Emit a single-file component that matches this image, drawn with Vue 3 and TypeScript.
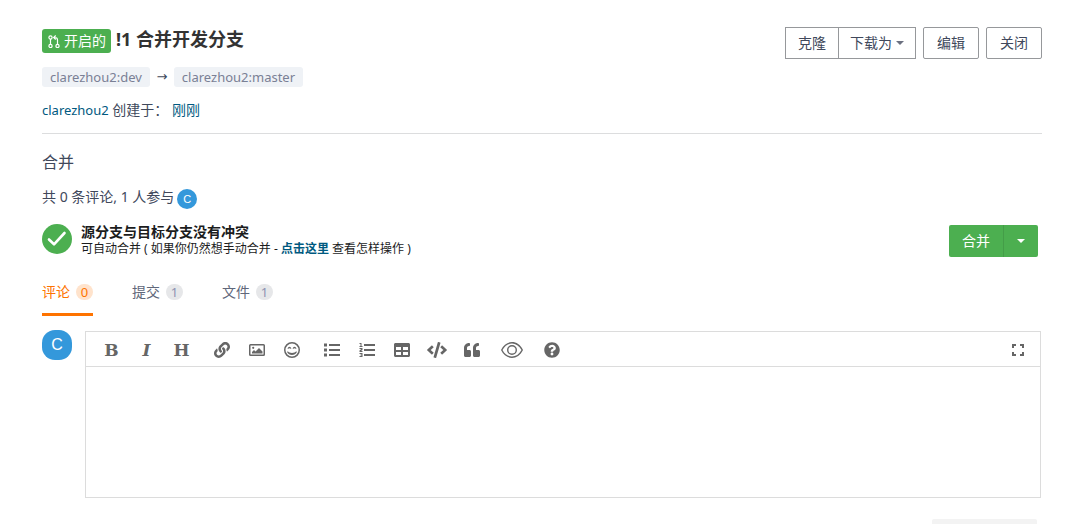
<script setup lang="ts">
import { ref } from 'vue'

interface Tab {
  id: string
  label: string
  count: number
}

interface Tool {
  name: string
  title: string
  viewBox?: string
  path?: string
  letter?: string
}

const tabs: Tab[] = [
  { id: 'comments', label: '评论', count: 0 },
  { id: 'commits', label: '提交', count: 1 },
  { id: 'files', label: '文件', count: 1 },
]
const activeTab = ref('comments')
const comment = ref('')

const tools: Tool[] = [
  { name: 'bold', title: '粗体', letter: 'B' },
  { name: 'italic', title: '斜体', letter: 'I' },
  { name: 'heading', title: '标题', letter: 'H' },
  {
    name: 'link',
    title: '链接',
    viewBox: '0 0 512 512',
    path: 'M326.612 185.391c59.747 59.809 58.927 155.698.36 214.59-.11.12-.24.25-.36.37l-67.2 67.2c-59.27 59.27-155.699 59.262-214.96 0-59.27-59.26-59.27-155.7 0-214.96l37.106-37.106c9.84-9.84 26.786-3.3 27.294 10.606.648 17.722 3.826 35.527 9.69 52.721 1.986 5.822.567 12.262-3.783 16.612l-13.087 13.087c-28.026 28.026-28.905 73.66-1.155 101.96 28.024 28.579 74.086 28.749 102.325.51l67.2-67.19c28.191-28.191 28.073-73.757 0-101.83-3.701-3.694-7.429-6.564-10.341-8.569a16.037 16.037 0 0 1-6.947-12.606c-.396-10.567 3.348-21.456 11.698-29.806l21.054-21.055c5.521-5.521 14.182-6.199 20.584-1.731a152.482 152.482 0 0 1 20.522 17.197zM467.547 44.449c-59.261-59.262-155.69-59.27-214.96 0l-67.2 67.2c-.12.12-.25.25-.36.37-58.566 58.892-59.387 154.781.36 214.59a152.454 152.454 0 0 0 20.521 17.196c6.402 4.468 15.064 3.789 20.584-1.731l21.054-21.055c8.35-8.35 12.094-19.239 11.698-29.806a16.037 16.037 0 0 0-6.947-12.606c-2.912-2.005-6.64-4.875-10.341-8.569-28.073-28.073-28.191-73.639 0-101.83l67.2-67.19c28.239-28.239 74.3-28.069 102.325.51 27.75 28.3 26.872 73.934-1.155 101.96l-13.087 13.087c-4.35 4.35-5.769 10.79-3.783 16.612 5.864 17.194 9.042 34.999 9.69 52.721.509 13.906 17.454 20.446 27.294 10.606l37.106-37.106c59.271-59.259 59.271-155.699.001-214.959z',
  },
  {
    name: 'image',
    title: '图片',
    viewBox: '0 0 16 16',
    path: 'M1.500 2h13A1.500 1.500 0 0 1 16 3.500v9a1.500 1.500 0 0 1-1.500 1.500h-13A1.500 1.500 0 0 1 0 12.500v-9A1.500 1.500 0 0 1 1.500 2zM1.500 3.500v9h13v-9zM3 11.500V10l2-2 1.500 1.500L10 6l3.500 3.500v2zM4.200 4.700a1.100 1.100 0 1 1 0 2.200 1.100 1.100 0 0 1 0-2.200z',
  },
  {
    name: 'emoji',
    title: '表情',
    viewBox: '0 0 16 16',
    path: 'M8 0a8 8 0 1 1 0 16A8 8 0 0 1 8 0zm0 1.500a6.500 6.500 0 1 0 0 13A6.500 6.500 0 0 0 8 1.500zM3.600 7C4 4 7 4 7.300 7L5.500 6.300zM8.700 7C9 4 12 4 12.400 7L10.500 6.300zM3.800 9.300c1.600 2.200 6.800 2.200 8.400 0l.7.6c-1.500 4-8.300 4-9.800 0z',
  },
  {
    name: 'list',
    title: '无序列表',
    viewBox: '0 0 16 16',
    path: 'M0 1.500h3v3H0zM0 6.500h3v3H0zM0 11.500h3v3H0zM5 2h11v2H5zM5 7h11v2H5zM5 12h11v2H5z',
  },
  {
    name: 'ordered',
    title: '有序列表',
    viewBox: '0 0 16 16',
    path: 'M5 2h11v2H5zM5 7h11v2H5zM5 12h11v2H5zM.5 1h2v3h1v1H.500V4h1V2h-1zM.5 6h3v2l-1.500 1h1.500v1h-3V8.500L2.300 7H.5zM.5 11h3v4h-3v-1h2v-.6h-1v-.8h1V12h-2z',
  },
  {
    name: 'table',
    title: '表格',
    viewBox: '0 0 512 512',
    path: 'M464 32H48C21.490 32 0 53.490 0 80v352c0 26.510 21.490 48 48 48h416c26.510 0 48-21.490 48-48V80c0-26.510-21.490-48-48-48zM224 416H64v-96h160v96zm0-160H64v-96h160v96zm224 160H288v-96h160v96zm0-160H288v-96h160v96z',
  },
  {
    name: 'code',
    title: '代码',
    viewBox: '0 0 640 512',
    path: 'M278.900 511.500l-61-17.700c-6.400-1.800-10-8.500-8.200-14.900L346.200 8.700c1.800-6.400 8.500-10 14.900-8.200l61 17.700c6.400 1.800 10 8.500 8.200 14.900L293.800 503.300c-1.900 6.400-8.500 10.100-14.900 8.200zm-114-112.200l43.500-46.400c4.600-4.900 4.300-12.700-.8-17.200L117 256l90.600-79.700c5.100-4.500 5.500-12.300.8-17.200l-43.500-46.400c-4.500-4.800-12.100-5.100-17-.5L3.800 247.200c-5.100 4.700-5.100 12.800 0 17.500l144.100 135.100c4.900 4.600 12.500 4.400 17-.5zm327.200.6l144.100-135.100c5.100-4.700 5.100-12.800 0-17.500L492.100 112.100c-4.800-4.500-12.400-4.300-17 .5L431.600 159c-4.600 4.900-4.300 12.700.8 17.200L523 256l-90.600 79.700c-5.100 4.500-5.500 12.300-.8 17.200l43.500 46.400c4.500 4.900 12.100 5.100 17 .6z',
  },
  {
    name: 'quote',
    title: '引用',
    viewBox: '0 0 512 512',
    path: 'M464 256h-80v-64c0-35.300 28.700-64 64-64h8c13.300 0 24-10.700 24-24V56c0-13.300-10.700-24-24-24h-8c-88.400 0-160 71.600-160 160v240c0 26.500 21.500 48 48 48h128c26.500 0 48-21.500 48-48V304c0-26.500-21.500-48-48-48zm-288 0H96v-64c0-35.300 28.700-64 64-64h8c13.300 0 24-10.700 24-24V56c0-13.300-10.700-24-24-24h-8C71.600 32 0 103.600 0 192v240c0 26.500 21.500 48 48 48h128c26.500 0 48-21.500 48-48V304c0-26.500-21.500-48-48-48z',
  },
  {
    name: 'preview',
    title: '预览',
    viewBox: '0 0 22 16',
    path: 'M0 8C5-2.600 17-2.600 22 8 17 18.600 5 18.600 0 8zM1.500 8c4.500 8.700 14.500 8.700 19 0C16-.7 6-.7 1.500 8zM11 3a5 5 0 1 1 0 10 5 5 0 0 1 0-10zm0 1.400a3.600 3.600 0 1 0 0 7.200 3.600 3.600 0 0 0 0-7.200z',
  },
  {
    name: 'help',
    title: '帮助',
    viewBox: '0 0 512 512',
    path: 'M504 256c0 136.997-111.043 248-248 248S8 392.997 8 256C8 119.083 119.043 8 256 8s248 111.083 248 248zM262.655 90c-54.497 0-89.255 22.957-116.549 63.758-3.536 5.286-2.353 12.415 2.715 16.258l34.699 26.310c5.205 3.947 12.621 3.008 16.665-2.122 17.864-22.658 30.113-35.797 57.303-35.797 20.429 0 45.698 13.148 45.698 32.958 0 14.976-12.363 22.667-32.534 33.976C247.128 238.528 216 254.941 216 296v4c0 6.627 5.373 12 12 12h56c6.627 0 12-5.373 12-12v-1.333c0-28.462 83.186-29.647 83.186-106.667 0-58.002-60.165-102-116.531-102zM256 338c-25.365 0-46 20.635-46 46 0 25.364 20.635 46 46 46s46-20.636 46-46c0-25.365-20.635-46-46-46z',
  },
]
</script>

<template>
  <main class="page">
    <header class="head">
      <div class="intro">
        <h1 class="title">
          <span class="state">
            <svg class="state-icon" viewBox="0 0 12 14" aria-hidden="true">
              <g fill="none" stroke="currentColor" stroke-width="1.200">
                <circle cx="2.500" cy="3.500" r="1.600" />
                <circle cx="2.500" cy="12" r="1.600" />
                <circle cx="9.500" cy="12" r="1.600" />
                <path d="M2.500 5v5.500M9.500 10.500V6a2.500 2.500 0 0 0-2.500-2.500H6M7.700 1.500 5.700 3.500l2 2" />
              </g>
            </svg>
            开启的
          </span>
          <span>!1 合并开发分支</span>
        </h1>
        <div class="branches">
          <span class="branch">clarezhou2:dev</span>
          <span class="arrow">→</span>
          <span class="branch">clarezhou2:master</span>
        </div>
        <p class="created"><a href="#author" class="author">clarezhou2</a> 创建于： <a href="#time">刚刚</a></p>
      </div>
      <div class="actions">
        <div class="group">
          <button type="button" class="btn">克隆</button>
          <button type="button" class="btn download">下载为<span class="caret"></span></button>
        </div>
        <button type="button" class="btn round">编辑</button>
        <button type="button" class="btn round">关闭</button>
      </div>
    </header>

    <h2 class="subject">合并</h2>
    <div class="people">
      <span>共 0 条评论, 1 人参与</span>
      <span class="avatar small">C</span>
    </div>

    <section class="merge">
      <svg class="check" viewBox="0 0 30 30" aria-hidden="true">
        <circle cx="15" cy="15" r="15" fill="#4caf50" />
        <path d="M7 15.500l5 4.800L22.500 9" fill="none" stroke="#fff" stroke-width="2.600" stroke-linecap="round" stroke-linejoin="round" />
      </svg>
      <div class="merge-text">
        <strong>源分支与目标分支没有冲突</strong>
        <p>可自动合并 ( 如果你仍然想手动合并 - <a href="#manual">点击这里</a> 查看怎样操作 )</p>
      </div>
      <div class="merge-actions">
        <button type="button" class="merge-btn">合并</button>
        <button type="button" class="merge-more" aria-label="更多合并方式"><span class="caret"></span></button>
      </div>
    </section>

    <nav class="tabs">
      <a
        v-for="tab in tabs"
        :key="tab.id"
        :href="'#' + tab.id"
        class="tab"
        :class="{ active: tab.id === activeTab }"
        @click.prevent="activeTab = tab.id"
      >{{ tab.label }}<span class="count">{{ tab.count }}</span></a>
    </nav>

    <section class="composer">
      <span class="avatar">C</span>
      <div class="editor">
        <div class="toolbar">
          <button v-for="tool in tools" :key="tool.name" type="button" class="tool" :class="tool.name" :aria-label="tool.title">
            <span v-if="tool.letter">{{ tool.letter }}</span>
            <svg v-else :viewBox="tool.viewBox" aria-hidden="true">
              <path :d="tool.path" fill="currentColor" fill-rule="evenodd" />
            </svg>
          </button>
          <button type="button" class="tool expand" aria-label="全屏">
            <svg viewBox="0 0 12 12" aria-hidden="true">
              <path d="M1 4V1h3M8 1h3v3M11 8v3H8M4 11H1V8" fill="none" stroke="currentColor" stroke-width="2" />
            </svg>
          </button>
        </div>
        <textarea v-model="comment" class="input" aria-label="评论内容"></textarea>
      </div>
    </section>
    <div class="submit-row">
      <button type="button" class="submit" disabled aria-label="提交评论"></button>
    </div>
  </main>
</template>

<style>
html,
body {
  margin: 0;
  background: #fff;
}
body {
  overflow: hidden;
}
</style>

<style scoped>
.page {
  box-sizing: border-box;
  padding: 27px 38px 0 42px;
  font: 14px/20px "Noto Sans", "Noto Sans CJK SC", sans-serif;
  color: #40485b;
}
h1, h2, p {
  margin: 0;
  font-weight: 400;
}
a {
  color: #005980;
  text-decoration: none;
}
button {
  margin: 0;
  font: inherit;
  color: inherit;
  cursor: pointer;
}
.head {
  display: flex;
  justify-content: space-between;
  height: 106px;
  border-bottom: 1px solid #dcddde;
}
.title {
  display: flex;
  gap: 5px;
  font-size: 18px;
  line-height: 24px;
  font-weight: 700;
  color: #333;
}
.state {
  display: flex;
  align-items: center;
  gap: 4px;
  height: 24px;
  margin-top: 2px;
  padding: 0 5px 0 6px;
  border-radius: 3px;
  background: #4caf50;
  color: #fff;
  font-size: 14px;
  font-weight: 400;
}
.state-icon {
  width: 12px;
  height: 14px;
}
.branches {
  display: flex;
  align-items: center;
  margin-top: 14px;
}
.branch {
  padding: 0 8px;
  border-radius: 3px;
  background: #eff2f6;
  color: #7a8095;
  font-size: 13px;
}
.arrow {
  width: 24px;
  text-align: center;
  font-family: "DejaVu Sans", sans-serif;
  font-size: 13px;
}
.created {
  margin-top: 13px;
}
.author {
  font-size: 13px;
}
.actions {
  display: flex;
  gap: 7px;
  height: 32px;
}
.group {
  display: flex;
}
.btn {
  padding: 0 12px;
  border: 1px solid #96989b;
  background: #fff;
}
.btn.round {
  padding: 0 13px;
  border-radius: 2px;
}
.btn.download {
  margin-left: -1px;
  padding: 0 11px;
}
.caret {
  display: inline-block;
  margin-left: 4px;
  border: 4px solid transparent;
  border-top-color: currentColor;
  border-bottom: 0;
  vertical-align: 3px;
}
.download .caret {
  color: #6b7080;
}
.subject {
  margin-top: 18px;
  font-size: 16px;
}
.people {
  display: flex;
  gap: 3px;
  height: 22px;
  margin-top: 15px;
}
.avatar {
  flex: none;
  width: 30px;
  border-radius: 13px;
  background: #3498db;
  color: #fff;
  font: 16px/30px "Liberation Sans", sans-serif;
  text-align: center;
  height: 30px;
}
.avatar.small {
  width: 20px;
  height: 20px;
  margin-top: 2px;
  border-radius: 10px;
  font-size: 11px;
  line-height: 20px;
}
.merge {
  display: flex;
  height: 34px;
  margin-top: 15px;
  padding-right: 4px;
  color: #1b1c1d;
}
.check {
  width: 30px;
  height: 30px;
  margin-right: 9px;
}
.merge-text strong {
  display: block;
  line-height: 16px;
}
.merge-text p {
  font-size: 12px;
  line-height: 18px;
}
.merge-text a {
  font-weight: 700;
}
.merge-actions {
  display: flex;
  height: 32px;
  margin: 1px 0 0 auto;
}
.merge-actions button {
  border: 0;
  padding: 0 13px;
  background: #4caf50;
  color: #fff;
}
.merge-actions .merge-btn {
  border-right: 1px solid #449d48;
  border-radius: 2px 0 0 2px;
}
.merge-actions .merge-more {
  border-radius: 0 2px 2px 0;
}
.merge-more .caret {
  margin-left: 0;
}
.tabs {
  display: flex;
  gap: 39px;
  margin-top: 24px;
}
.tab {
  display: flex;
  gap: 6px;
  height: 31px;
  border-bottom: 3px solid transparent;
  color: #60677a;
}
.tab.active {
  border-color: #fe7300;
  color: #fe7300;
}
.count {
  width: 17px;
  height: 16px;
  margin-top: 2px;
  border-radius: 8px;
  background: #e6e7e9;
  color: #8c92b0;
  font-size: 13px;
  line-height: 16px;
  text-align: center;
}
.active .count {
  background: #ffe3cc;
  color: #fe7300;
}
.composer {
  display: flex;
  gap: 13px;
  margin-top: 14px;
}
.editor {
  flex: 1;
  margin: 1px 1px 0 0;
  border: 1px solid #dcdcdc;
}
.toolbar {
  display: flex;
  align-items: center;
  height: 32px;
  padding: 2px 10px 0 13px;
  border-bottom: 1px solid #dcdcdc;
  color: #666;
}
.tool {
  display: flex;
  align-items: center;
  justify-content: center;
  width: 25px;
  height: 26px;
  margin-right: 10px;
  padding: 0;
  border: 0;
  background: none;
  font: 700 17px/26px "DejaVu Serif", serif;
}
.tool svg {
  width: 16px;
  height: 16px;
}
.tool.italic {
  font-style: italic;
}
.tool.heading,
.tool.emoji,
.tool.quote,
.tool.preview {
  margin-right: 15px;
}
.tool.code svg {
  width: 20px;
}
.tool.preview svg {
  width: 22px;
}
.tool.expand {
  width: 24px;
  margin: 0 0 0 auto;
}
.tool.expand svg {
  width: 12px;
  height: 12px;
}
.input {
  display: block;
  box-sizing: border-box;
  width: 100%;
  height: 130px;
  padding: 8px 14px;
  border: 0;
  outline: 0;
  resize: none;
  font: inherit;
}
.submit-row {
  display: flex;
  justify-content: flex-end;
  margin-top: 21px;
  padding-right: 5px;
}
.submit {
  width: 105px;
  height: 32px;
  border: 0;
  border-radius: 2px;
  background: #f3f3f3;
}
</style>
